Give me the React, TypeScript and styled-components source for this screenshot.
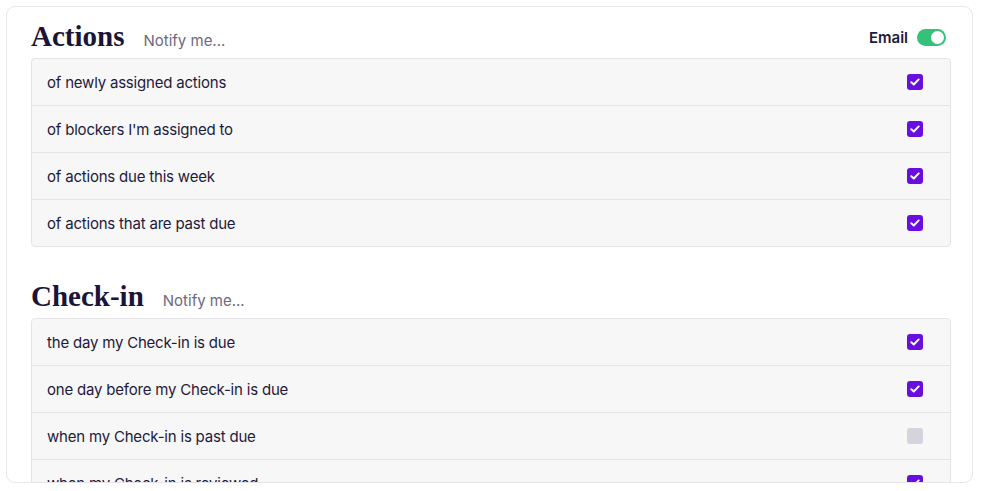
import styled, { createGlobalStyle } from "styled-components"

const GlobalStyle = createGlobalStyle`
  html, body {
    margin: 0;
    background: #ffffff;
  }
  body {
    font-family: Inter, "Noto Sans", sans-serif;
    color: #1d1a3b;
  }
`

const sections = [
  {
    title: "Actions",
    email: true,
    items: [
      { label: "of newly assigned actions", checked: true },
      { label: "of blockers I'm assigned to", checked: true },
      { label: "of actions due this week", checked: true },
      { label: "of actions that are past due", checked: true },
    ],
  },
  {
    title: "Check-in",
    email: false,
    items: [
      { label: "the day my Check-in is due", checked: true },
      { label: "one day before my Check-in is due", checked: true },
      { label: "when my Check-in is past due", checked: false },
      { label: "when my Check-in is reviewed", checked: true },
    ],
  },
]

const CheckMark = () => (
  <svg width="10" height="8" viewBox="0 0 10 8" fill="none">
    <path d="M1.3 4.2 L3.8 6.5 L8.7 1.4" stroke="#fff" strokeWidth="1.9" strokeLinecap="round" strokeLinejoin="round" />
  </svg>
)

const App = () => {
  return (
    <Page>
      <GlobalStyle />
      <Card>
        {sections.map((section) => (
          <Section key={section.title}>
            <Header>
              <Title>{section.title}</Title>
              <Hint>Notify me...</Hint>
              {section.email && (
                <EmailToggle>
                  <span>Email</span>
                  <Switch $on>
                    <Knob />
                  </Switch>
                </EmailToggle>
              )}
            </Header>
            <List>
              {section.items.map((item) => (
                <Row key={item.label}>
                  <Label>{item.label}</Label>
                  <Checkbox $checked={item.checked}>{item.checked && <CheckMark />}</Checkbox>
                </Row>
              ))}
            </List>
          </Section>
        ))}
      </Card>
    </Page>
  )
}

const Page = styled.div`
  padding: 6px 11px 8px 6px;
`

const Card = styled.div`
  box-sizing: border-box;
  height: 477px;
  overflow: hidden;
  border: 1px solid #e6e6ea;
  border-radius: 9px;
  padding: 13px 21px 0 24px;
  display: flex;
  flex-direction: column;
  gap: 33px;
`

const Section = styled.section`
  display: flex;
  flex-direction: column;
  gap: 6px;
`

const Header = styled.div`
  display: flex;
  align-items: baseline;
  padding-right: 5px;
`

const Title = styled.h2`
  margin: 0;
  font-family: "Liberation Serif", "DejaVu Serif", serif;
  font-weight: 700;
  font-size: 29px;
  line-height: 32px;
  color: #1a1538;
`

const Hint = styled.span`
  margin-left: 19px;
  font-size: 15px;
  color: #6c6882;
`

const EmailToggle = styled.div`
  margin-left: auto;
  display: flex;
  align-items: center;
  gap: 9px;
  align-self: center;
  font-size: 15px;
  font-weight: 600;
  color: #1d1a3b;
  margin-top: 2px;
`

const Switch = styled.div<{ $on?: boolean }>`
  width: 29px;
  height: 17px;
  border-radius: 9px;
  background: ${(p) => (p.$on ? "#34c27a" : "#d4d3dd")};
  display: flex;
  align-items: center;
  justify-content: ${(p) => (p.$on ? "flex-end" : "flex-start")};
  padding: 0 2px;
  box-sizing: border-box;
`

const Knob = styled.div`
  width: 13px;
  height: 13px;
  border-radius: 50%;
  background: #fff;
`

const List = styled.div`
  border: 1px solid #e4e4e8;
  border-radius: 4px;
  background: #f7f7f8;
  overflow: hidden;
`

const Row = styled.div`
  display: flex;
  align-items: center;
  justify-content: space-between;
  height: 46px;
  padding: 0 27px 0 15px;
  & + & {
    border-top: 1px solid #e4e4e8;
  }
`

const Label = styled.span`
  font-size: 15px;
  letter-spacing: -0.2px;
  color: #1d1a3b;
`

const Checkbox = styled.div<{ $checked: boolean }>`
  width: 16px;
  height: 16px;
  border-radius: 3px;
  background: ${(p) => (p.$checked ? "#6a0ee0" : "#d5d4de")};
  display: flex;
  align-items: center;
  justify-content: center;
`

export default App
